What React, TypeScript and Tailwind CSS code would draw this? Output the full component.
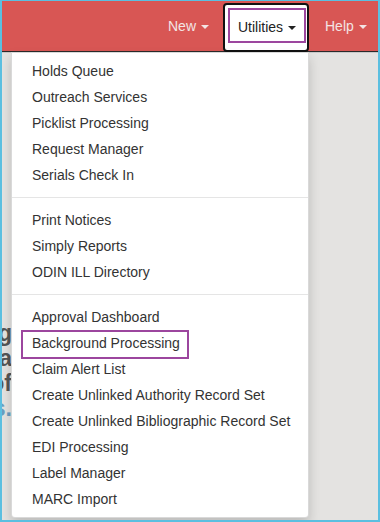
import React from "react";

const groups: string[][] = [
  ["Holds Queue", "Outreach Services", "Picklist Processing", "Request Manager", "Serials Check In"],
  ["Print Notices", "Simply Reports", "ODIN ILL Directory"],
  [
    "Approval Dashboard",
    "Background Processing",
    "Claim Alert List",
    "Create Unlinked Authority Record Set",
    "Create Unlinked Bibliographic Record Set",
    "EDI Processing",
    "Label Manager",
    "MARC Import",
  ],
];

const Caret = ({ dark }: { dark?: boolean }) => (
  <span
    className={`ml-[5px] inline-block h-0 w-0 border-x-[4px] border-t-[4px] border-x-transparent align-middle ${
      dark ? "border-t-[#222]" : "border-t-[#f3e4e4]"
    }`}
  />
);

const App = () => {
  return (
    <div className="relative h-[522px] w-[380px] overflow-hidden border-x-2 border-b-2 border-t border-[#5bbfe0] bg-[#e4e3e1] font-['Liberation_Sans',Arial,sans-serif] text-[14px]">
      {/* navbar */}
      <nav className="flex h-[51px] justify-end border-b border-[#2a2a2a] bg-[#d85654]">
        <a className="w-[70px] py-[15px] pl-[15px] leading-[20px] text-[#f3e4e4]">
          New
          <Caret />
        </a>
        <div className="relative mt-[2px] h-[49px] w-[86px] rounded-[4px] border-2 border-[#111] bg-white">
          <a className="block py-[12px] pl-[13px] leading-[20px] text-[#222]">
            Utilities
            <Caret dark />
          </a>
          <div className="absolute bottom-[7px] left-[3px] right-[1px] top-[3px] border-2 border-[#9c469e]" />
        </div>
        <a className="w-[69px] py-[15px] pl-[16px] leading-[20px] text-[#f3e4e4]">
          Help
          <Caret />
        </a>
      </nav>
      <div className="h-px bg-[#c9c9c9]" />

      {/* page content behind the menu */}
      <div className="mt-[268px] flex w-[10px] flex-col overflow-hidden text-[23px] font-bold leading-[25px] text-[#555]">
        <div className="flex justify-end whitespace-nowrap">Backg</div>
        <div className="flex justify-end whitespace-nowrap">da</div>
        <div className="flex justify-end whitespace-nowrap">of</div>
        <div className="flex justify-end whitespace-nowrap text-[#6b9ec2]">rs.</div>
      </div>

      {/* dropdown */}
      <ul className="absolute left-[9px] top-[51px] w-[298px] rounded-b-[4px] border border-[rgba(0,0,0,0.15)] bg-white py-[5px] shadow-[0_6px_12px_rgba(0,0,0,0.175)]">
        {groups.map((items, gi) => (
          <React.Fragment key={gi}>
            {gi > 0 && <li className="my-[9px] h-px bg-[#e5e5e5]" />}
            {items.map((item) => (
              <li key={item} className="relative">
                <a className="block whitespace-nowrap px-[20px] py-[3px] leading-[20px] text-[#333]">{item}</a>
                {item === "Background Processing" && (
                  <div className="absolute left-[9px] top-0 h-[29px] w-[168px] border-2 border-[#9c469e]" />
                )}
              </li>
            ))}
          </React.Fragment>
        ))}
      </ul>
    </div>
  );
};

export default App;
